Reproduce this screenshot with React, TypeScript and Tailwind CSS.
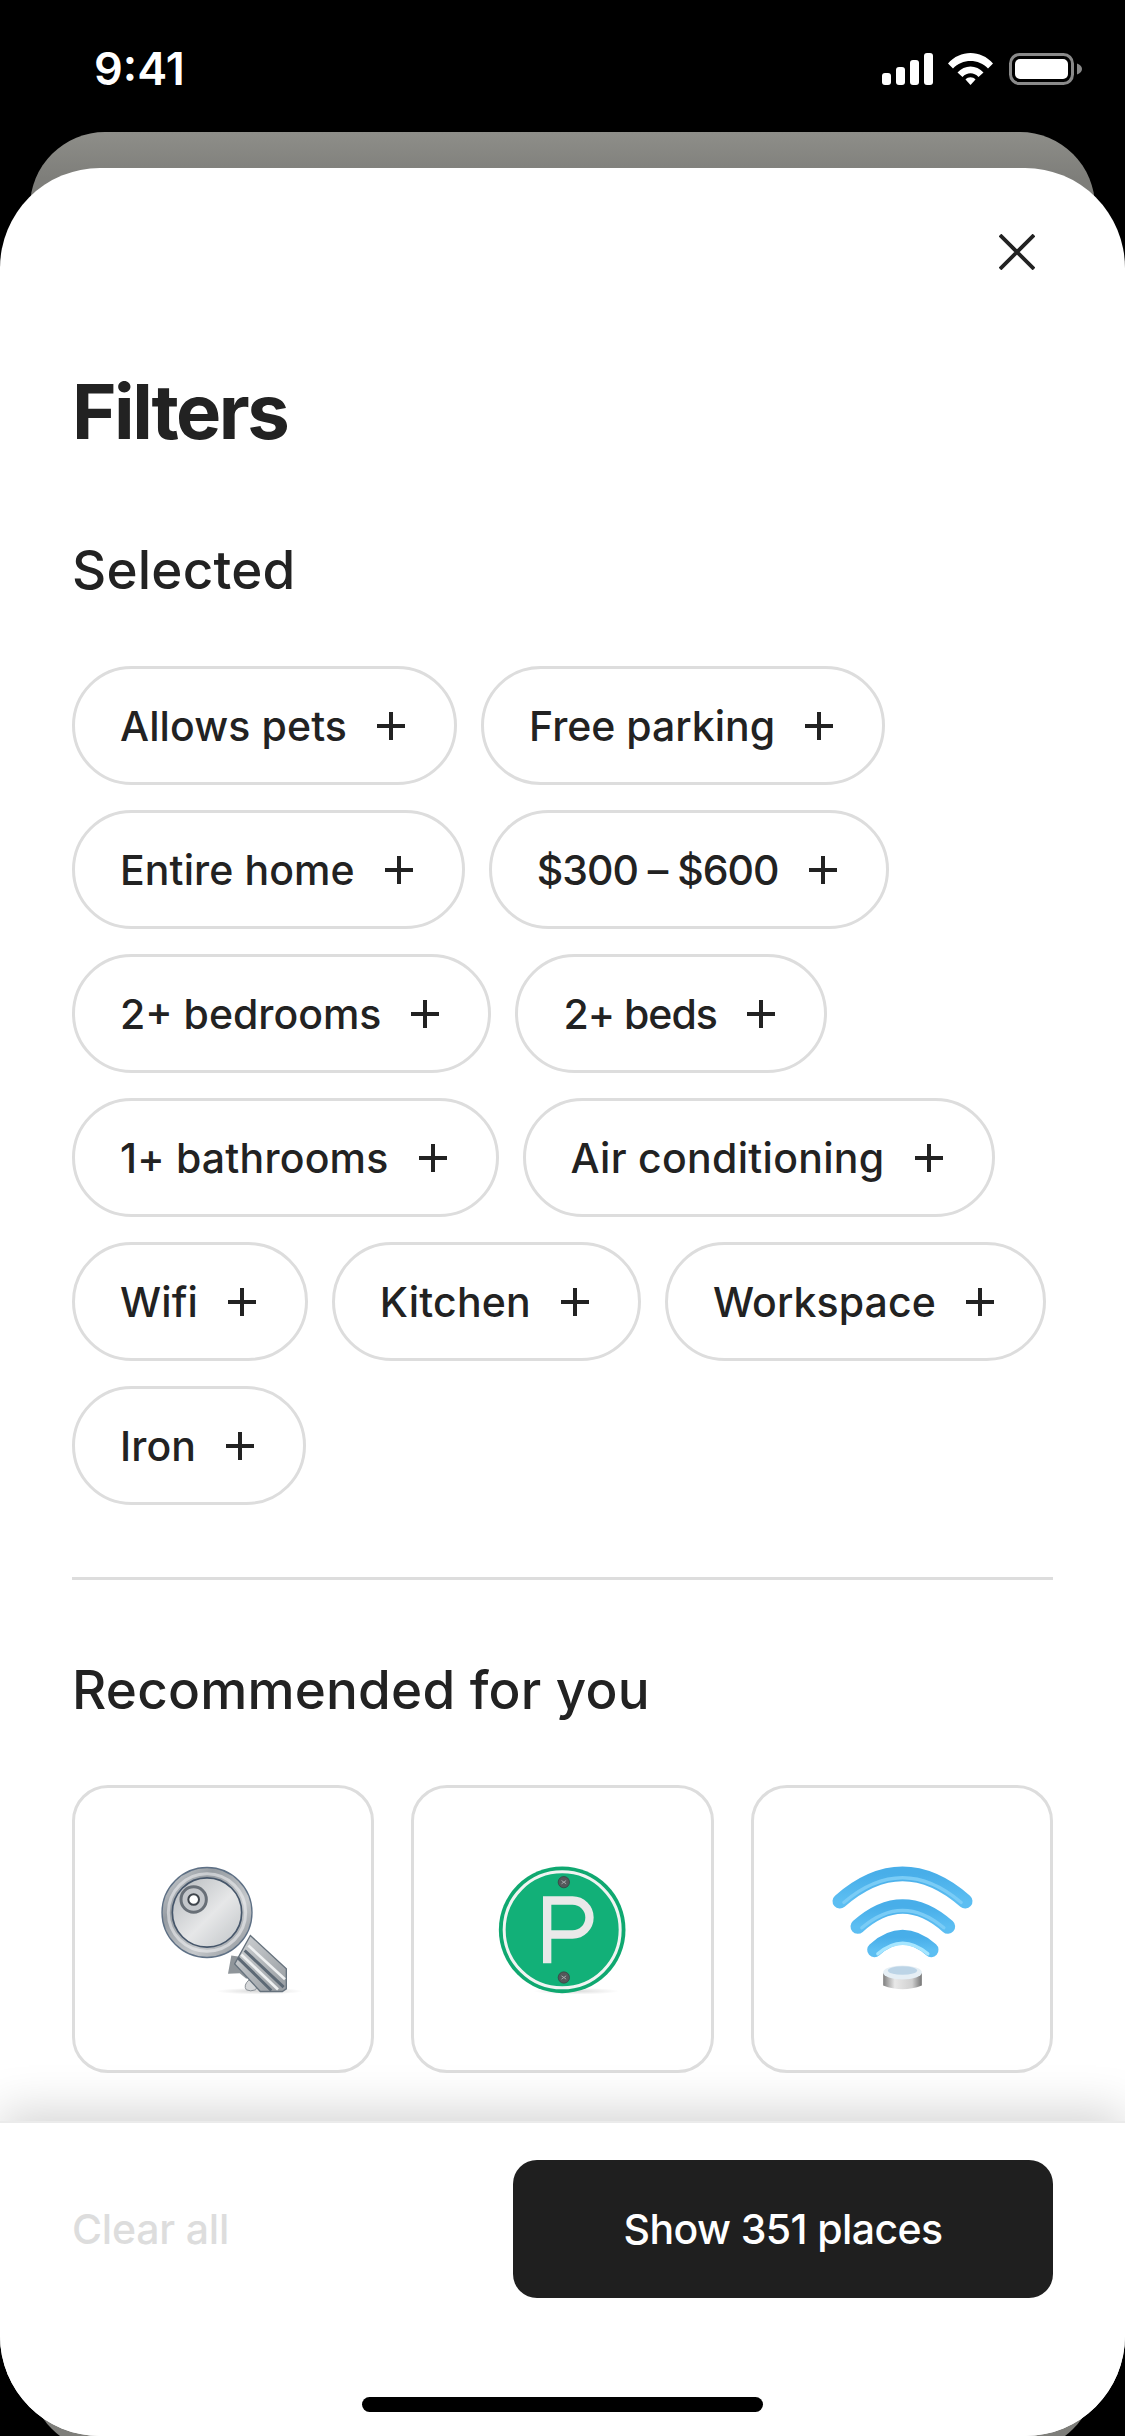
const chips = [
  { label: "Allows pets", track: "tracking-[0.100px]" },
  { label: "Free parking", track: "tracking-[0px]" },
  { label: "Entire home", track: "tracking-[0.100px]" },
  { label: "$300 – $600", track: "tracking-[-1px]" },
  { label: "2+ bedrooms", track: "tracking-[0px]" },
  { label: "2+ beds", track: "tracking-[-1px]" },
  { label: "1+ bathrooms", track: "tracking-[0.200px]" },
  { label: "Air conditioning", track: "tracking-[0.300px]" },
  { label: "Wifi", track: "tracking-[0.100px]" },
  { label: "Kitchen", track: "tracking-[0.200px]" },
  { label: "Workspace", track: "tracking-[0.100px]" },
  { label: "Iron", track: "tracking-[0.100px]" },
];

function Plus() {
  return (
    <svg viewBox="0 0 28 28" className="h-[28px] w-[28px] shrink-0" fill="none" stroke="#222222" strokeWidth="4">
      <path d="M14 0V28M0 14H28" />
    </svg>
  );
}

function KeyArt() {
  return (
    <svg viewBox="-20 -4.5 600 540" className="h-[180px] w-[200px]">
      <defs>
        <linearGradient id="keyRing" x1="0" y1="0" x2="1" y2="1">
          <stop offset="0" stopColor="#d4d7da" />
          <stop offset="0.3" stopColor="#969ca2" />
          <stop offset="0.65" stopColor="#c6c9cc" />
          <stop offset="1" stopColor="#858b91" />
        </linearGradient>
        <linearGradient id="keyFace" x1="0" y1="0" x2="1" y2="1">
          <stop offset="0" stopColor="#b3b7bb" />
          <stop offset="0.55" stopColor="#e6e7e8" />
          <stop offset="1" stopColor="#bfc3c6" />
        </linearGradient>
        <linearGradient id="keyBlade" x1="0" y1="0" x2="1" y2="1">
          <stop offset="0" stopColor="#cfd2d4" />
          <stop offset="1" stopColor="#989da2" />
        </linearGradient>
        <radialGradient id="floorShade">
          <stop offset="0" stopColor="#000000" stopOpacity="0.16" />
          <stop offset="1" stopColor="#000000" stopOpacity="0" />
        </radialGradient>
      </defs>
      <ellipse cx="390" cy="452" rx="130" ry="10" fill="url(#floorShade)" />
      <path d="M305 345L295 400L330 398L350 415L370 400L340 350Z" fill="#8f959a" />
      <path d="M358 418Q340 435 350 448Q362 454 378 448L385 432Z" fill="#d6d8da" stroke="#8a9096" strokeWidth="3" />
      <path d="M362 285L470 385V445L458 453H392L315 370Z" fill="url(#keyBlade)" stroke="#66727d" strokeWidth="4" />
      <path d="M345 330L462 440M325 352L425 450" stroke="#5d6975" strokeWidth="9" fill="none" />
      <path d="M356 315L466 416M335 342L445 447" stroke="#eef0f1" strokeWidth="8" fill="none" />
      <circle cx="232" cy="216" r="135" fill="url(#keyRing)" stroke="#5e7085" strokeWidth="4" />
      <circle cx="232" cy="216" r="116" fill="none" stroke="#f2f3f4" strokeWidth="9" opacity="0.55" />
      <circle cx="232" cy="216" r="104" fill="url(#keyFace)" stroke="#46566a" strokeWidth="5" />
      <circle cx="192" cy="177" r="38" fill="#c3c6ca" stroke="#686f77" strokeWidth="9" />
      <circle cx="192" cy="177" r="16" fill="#ffffff" stroke="#3f454c" strokeWidth="6" />
    </svg>
  );
}

function ParkingArt() {
  return (
    <svg viewBox="-22.5 -4.5 600 540" className="h-[180px] w-[200px]">
      <defs>
        <radialGradient id="parkShade">
          <stop offset="0" stopColor="#000000" stopOpacity="0.14" />
          <stop offset="1" stopColor="#000000" stopOpacity="0" />
        </radialGradient>
      </defs>
      <ellipse cx="320" cy="452" rx="130" ry="10" fill="url(#parkShade)" />
      <circle cx="278" cy="268" r="190" fill="#0fa870" />
      <circle cx="278" cy="268" r="174" fill="#12b078" stroke="#f1f4f2" strokeWidth="9" />
      <path d="M233 368V180H309A51 51 0 0 1 309 282H233" fill="none" stroke="#e9e9e9" strokeWidth="25" />
      <circle cx="283" cy="125" r="17" fill="#54585a" stroke="#35393b" strokeWidth="2" />
      <circle cx="283" cy="411" r="17" fill="#54585a" stroke="#35393b" strokeWidth="2" />
      <path d="M276 120L290 130M290 120L276 130M276 406L290 416M290 406L276 416" stroke="#a4a8aa" strokeWidth="3" />
    </svg>
  );
}

function WifiArt() {
  return (
    <svg viewBox="4.5 -4.5 600 540" className="h-[180px] w-[200px]">
      <defs>
        <linearGradient id="wave" x1="0" y1="0" x2="0" y2="1">
          <stop offset="0" stopColor="#48aee9" />
          <stop offset="1" stopColor="#5cbef2" />
        </linearGradient>
        <linearGradient id="puck" x1="0" y1="0" x2="1" y2="0">
          <stop offset="0" stopColor="#7f7f7f" />
          <stop offset="0.3" stopColor="#e8e8e8" />
          <stop offset="0.75" stopColor="#d0d0d0" />
          <stop offset="1" stopColor="#757575" />
        </linearGradient>
      </defs>
      <g fill="none" stroke="url(#wave)" strokeLinecap="round">
        <path d="M118 182Q306 18 494 182" strokeWidth="44" />
        <path d="M172 258Q306 138 442 258" strokeWidth="44" />
        <path d="M222 328Q306 252 392 328" strokeWidth="44" />
      </g>
      <g fill="none" stroke="#7accf6" strokeLinecap="round" strokeWidth="10">
        <path d="M130 186Q306 38 482 186" />
        <path d="M184 262Q306 158 430 262" />
        <path d="M232 340Q306 276 382 340" stroke="#a6e6ff" />
      </g>
      <path d="M248 398V435Q306 458 364 435V398Z" fill="url(#puck)" />
      <ellipse cx="306" cy="396" rx="58" ry="21" fill="#e6eff5" />
      <ellipse cx="306" cy="390" rx="44" ry="13" fill="#bcd4e6" />
    </svg>
  );
}

export default function App() {
  return (
    <div className="relative h-[2436px] w-[1125px] overflow-hidden bg-black font-['Inter','Liberation_Sans',sans-serif]">
      <div className="flex h-[132px] items-start justify-between pl-[94px] pr-[43px] pt-[53px]">
        <span className="text-[45px] font-semibold leading-[32px] text-white">9:41</span>
        <div className="flex h-[32px] items-center">
          <svg viewBox="0 0 51 32" className="h-[32px] w-[51px]" fill="#ffffff">
            <rect x="0" y="20" width="9" height="12" rx="3" />
            <rect x="14" y="14" width="9" height="18" rx="3" />
            <rect x="28" y="7" width="9" height="25" rx="3" />
            <rect x="42" y="0" width="9" height="32" rx="3" />
          </svg>
          <svg viewBox="0 0 45 32" className="ml-[15px] h-[32px] w-[45px]" fill="#ffffff">
            <path d="M0 10.500C12-3.500 33-3.500 45 10.500L40 15.500C31 5.500 14 5.500 5 15.500Z" />
            <path d="M9.500 19.500C16.500 11.500 28.500 11.500 35.500 19.500L30.500 24C26 19 19 19 14.500 24Z" />
            <path d="M17.500 26.500C20 23.500 25 23.500 27.500 26.500L22.500 32Z" />
          </svg>
          <svg viewBox="0 0 73 32" className="ml-[16px] h-[32px] w-[73px]">
            <rect x="1.500" y="1.500" width="62" height="29" rx="9" fill="none" stroke="#8a8a8a" strokeWidth="3" />
            <rect x="6" y="6" width="53" height="20" rx="5" fill="#ffffff" />
            <path d="M68 10.500C71 11.500 73 13.500 73 16C73 18.500 71 20.500 68 21.500Z" fill="#8a8a8a" />
          </svg>
        </div>
      </div>

      <div className="absolute inset-x-[30px] bottom-[-15px] top-[132px] rounded-[75px] bg-gradient-to-b from-[#8e8e89] from-0% to-[#7e7e7a] to-[2%]" />

      <div className="absolute inset-x-0 bottom-0 top-[168px] flex flex-col overflow-hidden rounded-[100px] bg-white text-[#222222]">
        <div className="min-h-0 flex-1 overflow-hidden px-[72px]">
          <div className="flex justify-end pr-[18px] pt-[66px]">
            <svg viewBox="0 0 36 36" className="h-[36px] w-[36px]" fill="none" stroke="#222222" strokeWidth="3.800">
              <path d="M1 1L35 35M35 1L1 35" />
            </svg>
          </div>
          <h1 className="mt-[100px] text-[76px] font-bold leading-[82px] tracking-[-2.500px]">Filters</h1>
          <h2 className="mt-[88px] text-[53px] font-medium leading-[60px] tracking-[0.200px]">Selected</h2>
          <div className="mt-[66px] flex flex-wrap gap-x-[24px] gap-y-[25px]">
            {chips.map((c) => (
              <div key={c.label} className="flex h-[119px] items-center gap-[30px] rounded-full border-[3px] border-[#dddddd] pl-[45px] pr-[49px]">
                <span className={`whitespace-nowrap text-[41px] font-medium leading-[50px] ${c.track}`}>{c.label}</span>
                <Plus />
              </div>
            ))}
          </div>
          <div className="mt-[72px] h-[3px] bg-[#dddddd]" />
          <h2 className="mt-[80px] text-[53px] font-medium leading-[60px] tracking-[0.200px]">Recommended for you</h2>
          <div className="mt-[65px] grid grid-cols-3 gap-x-[37px]">
            {[
              { label: "Self check-in", art: <KeyArt /> },
              { label: "Free parking", art: <ParkingArt /> },
              { label: "Wifi", art: <WifiArt /> },
            ].map((c) => (
              <div key={c.label} className="flex flex-col">
                <div className="flex h-[288px] items-center justify-center rounded-[36px] border-[3px] border-[#dddddd]">
                  {c.art}
                </div>
                <span className="mt-[41px] text-center text-[41px] font-medium leading-[50px]">{c.label}</span>
              </div>
            ))}
          </div>
        </div>

        <div className="relative flex h-[315px] shrink-0 flex-col items-center border-t-[2px] border-[#ebebeb] bg-white pt-[37px] shadow-[0_-10px_44px_rgba(0,0,0,0.17)]">
          <div className="flex w-full items-center justify-between px-[72px]">
            <span className="text-[41px] font-medium leading-[50px] tracking-[-0.200px] text-[#dddddd]">Clear all</span>
            <button className="flex h-[138px] w-[540px] items-center justify-center rounded-[24px] bg-[#1f1f1f] text-[41px] font-medium leading-[50px] tracking-[-0.600px] text-white">
              Show 351 places
            </button>
          </div>
          <div className="mt-[99px] h-[15px] w-[401px] rounded-full bg-black" />
        </div>
      </div>
    </div>
  );
}
